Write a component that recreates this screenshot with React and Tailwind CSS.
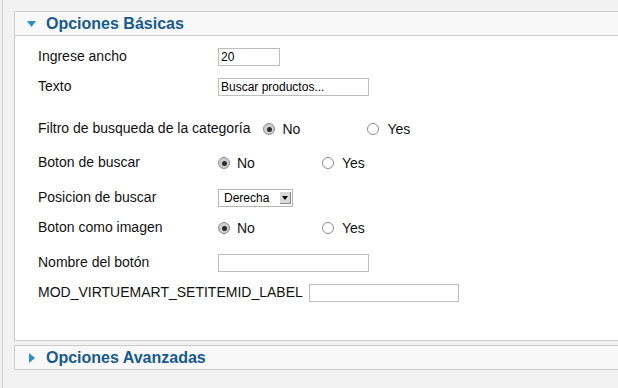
import React from "react";

const Radio = ({ checked }) =>
  checked ? (
    <span className="w-[12px] h-[12px] rounded-full border border-[#8c8c8c] bg-[#cfcfcf] flex items-center justify-center shrink-0">
      <span className="w-[5px] h-[5px] rounded-full bg-[#2b2b2b]" />
    </span>
  ) : (
    <span className="w-[12px] h-[12px] rounded-full border border-[#8a8a8a] bg-white shrink-0" />
  );

const Label = ({ children }) => (
  <span className="min-w-[174px] mr-[6px] mb-[2px] shrink-0 whitespace-nowrap">{children}</span>
);

const YesNo = ({ className = "" }) => (
  <div className={`flex items-center ${className}`}>
    <div className="w-[104px] flex items-center">
      <Radio checked />
      <span className="ml-[7px]">No</span>
    </div>
    <div className="flex items-center">
      <Radio />
      <span className="ml-[8px]">Yes</span>
    </div>
  </div>
);

const TextBox = ({ width, value = "" }) => (
  <input
    type="text"
    readOnly
    value={value}
    className={`${width} h-[18px] box-border border border-[#bdbdbd] bg-white px-[2px] text-[12px] text-black outline-none font-['Liberation_Sans',Arial,sans-serif]`}
  />
);

const Header = ({ open, title }) => (
  <div className="h-[23px] flex items-center pl-[12px] bg-[#f8f8f8]">
    {open ? (
      <svg width="9" height="6" viewBox="0 0 9 6" className="shrink-0 mt-[1px]">
        <path d="M0 0 H9 L4.5 6 Z" fill="#2b8ccb" />
      </svg>
    ) : (
      <svg width="6" height="10" viewBox="0 0 6 10" className="shrink-0 ml-[2px] mr-[1px]">
        <path d="M0 0 L6 5 L0 10 Z" fill="#2b8ccb" />
      </svg>
    )}
    <span className="ml-[10px] text-[16px] font-bold text-[#165a8f] whitespace-nowrap">{title}</span>
  </div>
);

export default function App() {
  return (
    <div className="w-[618px] h-[388px] overflow-hidden bg-[#f2f2f2] pl-[2px] font-['Liberation_Sans',Arial,sans-serif] text-[14px] text-[#111]">
      <div className="h-full border-l border-[#cccccc] pl-[11px] pt-[11px]">
        <div className="w-[700px] border border-[#cccccc] bg-white">
          <div className="border-b border-[#cccccc]">
            <Header open title="Opciones Básicas" />
          </div>
          <div className="h-[304px] pt-[6px] pl-[23px]">
            <div className="h-[30px] flex items-center">
              <Label>Ingrese ancho</Label>
              <TextBox width="w-[62px]" value="20" />
            </div>
            <div className="h-[30px] flex items-center">
              <Label>Texto</Label>
              <TextBox width="w-[151px]" value="Buscar productos..." />
            </div>
            <div className="h-[30px] mt-[12px] flex items-center">
              <Label>Filtro de busqueda de la categoría</Label>
              <YesNo className="ml-[7px]" />
            </div>
            <div className="h-[30px] mt-[4px] flex items-center">
              <Label>Boton de buscar</Label>
              <YesNo />
            </div>
            <div className="h-[30px] mt-[5px] flex items-center">
              <Label>Posicion de buscar</Label>
              <div className="w-[75px] h-[18px] box-border border border-[#b5b5b5] bg-white flex items-center justify-between pl-[5px] pr-[1px] text-[12px] text-black">
                <span>Derecha</span>
                <span className="w-[11px] h-[12px] bg-[#d9d9d9] border-r border-b border-[#8a8a8a] flex items-center justify-center">
                  <svg width="6" height="4" viewBox="0 0 6 4">
                    <path d="M0 0 H6 L3 4 Z" fill="#000" />
                  </svg>
                </span>
              </div>
            </div>
            <div className="h-[30px] flex items-center">
              <Label>Boton como imagen</Label>
              <YesNo />
            </div>
            <div className="h-[30px] mt-[5px] flex items-center">
              <Label>Nombre del botón</Label>
              <TextBox width="w-[151px]" />
            </div>
            <div className="h-[30px] flex items-center">
              <Label>MOD_VIRTUEMART_SETITEMID_LABEL</Label>
              <TextBox width="w-[150px]" />
            </div>
          </div>
        </div>
        <div className="w-[700px] mt-[4px] border border-[#cccccc] bg-white">
          <Header title="Opciones Avanzadas" />
        </div>
      </div>
    </div>
  );
}
